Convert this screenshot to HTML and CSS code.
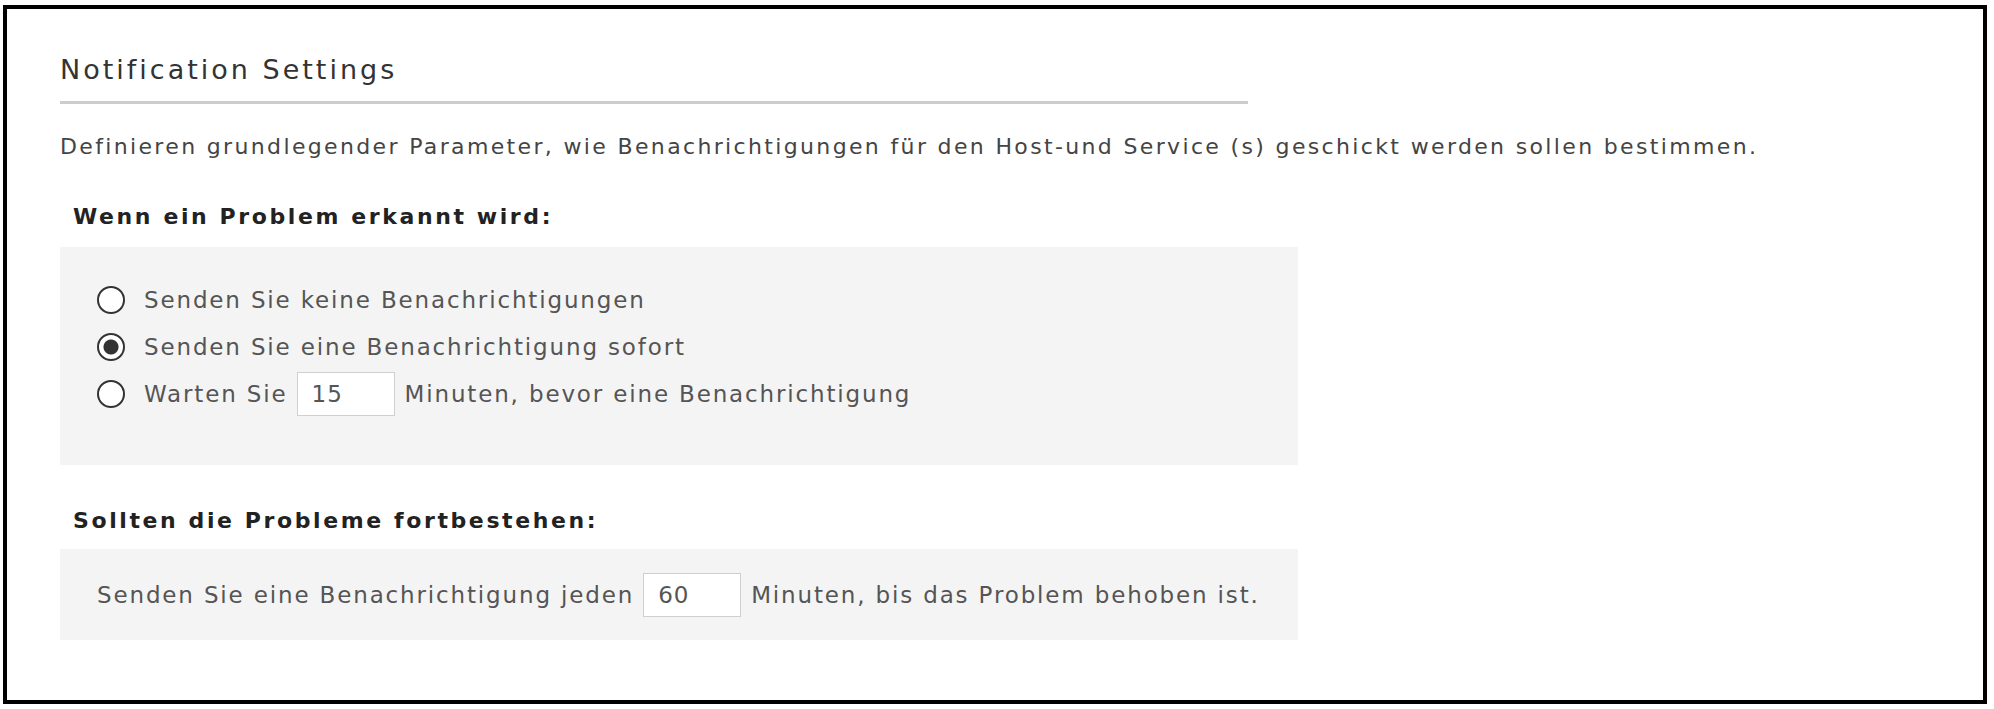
FILE: index.html
```html
<!DOCTYPE html>
<html lang="de">
  <head>
    <meta charset="UTF-8" />
    <meta name="viewport" content="width=device-width, initial-scale=1" />
    <title>Notification Settings</title>
    <link rel="stylesheet" href="styles.css">
  </head>
  <body>
    <div class="frame">
      <section class="settings">
        <h2 class="settings-title">Notification Settings</h2>
        <p class="intro">
          Definieren grundlegender Parameter, wie Benachrichtigungen für den Host-und Service (s) geschickt werden sollen bestimmen.
        </p>

        <h3 class="group-title">Wenn ein Problem erkannt wird:</h3>
        <div class="panel panel-options">
          <label class="option">
            <input type="radio" name="notify" />
            <span>Senden Sie keine Benachrichtigungen</span>
          </label>
          <label class="option">
            <input type="radio" name="notify" checked />
            <span>Senden Sie eine Benachrichtigung sofort</span>
          </label>
          <label class="option">
            <input type="radio" name="notify" />
            <span>Warten Sie</span>
            <input type="text" class="minutes" value="15" />
            <span>Minuten, bevor eine Benachrichtigung</span>
          </label>
        </div>

        <h3 class="group-title group-title-second">Sollten die Probleme fortbestehen:</h3>
        <div class="panel panel-repeat">
          <span>Senden Sie eine Benachrichtigung jeden</span>
          <input type="text" class="minutes" value="60" />
          <span>Minuten, bis das Problem behoben ist.</span>
        </div>
      </section>
    </div>
  </body>
</html>
```

FILE: styles.css
```css
body {
  margin: 0;
  background: #fff;
  font-family: "DejaVu Sans", Verdana, sans-serif;
  color: #444;
}

.frame {
  box-sizing: border-box;
  width: 1984px;
  height: 699px;
  margin: 5px 0 0 3px;
  border: 4px solid #000;
  padding: 0 0 0 53px;
}

.settings-title {
  width: 1188px;
  margin: 45px 0 0;
  padding: 0 0 15px;
  border-bottom: 3px solid #cdcdcd;
  font-size: 27px;
  line-height: 32px;
  letter-spacing: 3px;
  font-weight: normal;
  color: #333;
}

.intro {
  margin: 29px 0 0;
  font-size: 22px;
  line-height: 28px;
  letter-spacing: 2.35px;
  color: #444;
}

.group-title {
  margin: 42px 0 0 13px;
  font-size: 22px;
  line-height: 28px;
  letter-spacing: 2.6px;
  font-weight: bold;
  color: #222;
}

.panel {
  box-sizing: border-box;
  width: 1238px;
  background: #f4f4f4;
  font-size: 23px;
  letter-spacing: 1.85px;
  color: #555;
}

/* first block: radio options */
.panel-options {
  display: flex;
  flex-direction: column;
  gap: 1px;
  margin-top: 16px;
  height: 218px;
  padding: 30px 0 0 37px;
}

.option {
  display: flex;
  align-items: center;
  height: 46px;
}

.option input[type="radio"] {
  appearance: none;
  box-sizing: border-box;
  width: 28px;
  height: 28px;
  margin: 0 19px 0 0;
  border: 2px solid #333;
  border-radius: 50%;
  background: #fff;
}

.option input[type="radio"]:checked {
  background: radial-gradient(circle, #333 0 7px, #fff 8px);
}

.minutes {
  box-sizing: border-box;
  width: 98px;
  height: 44px;
  margin: 0 10px 0 9px;
  padding: 0 0 0 14px;
  border: 1px solid #cfcfcf;
  background: #fff;
  font-family: inherit;
  font-size: 23px;
  letter-spacing: 1px;
  color: #555;
}

/* second block: repeat interval */
.group-title-second {
  margin-top: 42px;
}

.panel-repeat {
  display: flex;
  align-items: center;
  margin-top: 14px;
  height: 91px;
  padding: 0 0 0 37px;
}
```
